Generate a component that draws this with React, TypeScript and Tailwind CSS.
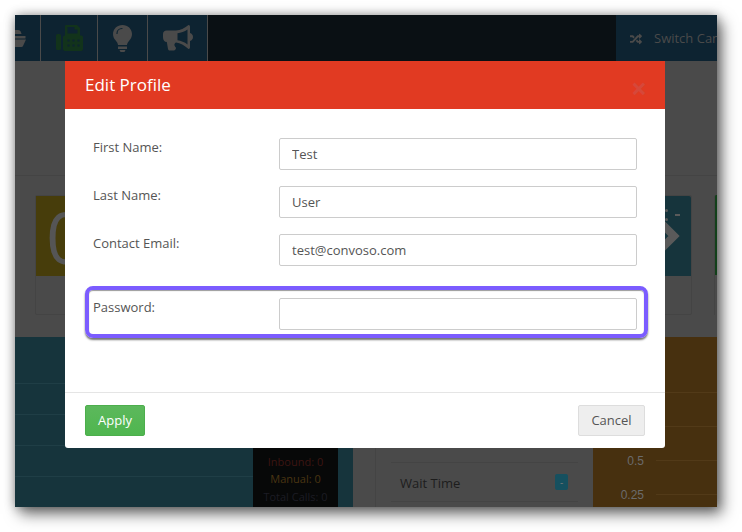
import { FaRandom } from 'react-icons/fa';

const font = 'font-["Open_Sans","Noto_Sans",sans-serif]';

const fields = [
  { label: 'First Name:', value: 'Test' },
  { label: 'Last Name:', value: 'User' },
  { label: 'Contact Email:', value: 'test@convoso.com' },
];

function Field({ label, value }: { label: string; value: string }) {
  return (
    <div className="flex h-[32px] items-start">
      <label className="w-[187px] shrink-0 pl-[1px] text-[13px] leading-[18px] text-[#555]">{label}</label>
      <input
        readOnly
        value={value}
        className="h-[32px] w-[358px] rounded-[2px] border border-[#ccc] bg-white px-3 text-[13px] text-[#555] outline-none"
      />
    </div>
  );
}

function PlateIcon() {
  return (
    <svg width="11" height="17" viewBox="0 0 11 17" fill="currentColor">
      <path d="M0 0h3c2 0 3 1.500 3.500 4H0z" />
      <path d="M0 6h10.500v2.500H0z" />
      <path d="M0 9.500h11L8 16c-.4.700-1 1-2 1H0z" />
    </svg>
  );
}

function FaxIcon() {
  return (
    <svg width="27" height="26" viewBox="0 0 27 26" fill="currentColor" fillRule="evenodd">
      <path d="M1.500 9h2A1.500 1.500 0 0 1 5 10.500v13A1.500 1.500 0 0 1 3.500 25h-2A1.500 1.500 0 0 1 0 23.500v-13A1.500 1.500 0 0 1 1.500 9z" />
      <path d="M10 0h11l3 3v7.500h1.500A1.500 1.500 0 0 1 27 12v12a2 2 0 0 1-2 2H9a2 2 0 0 1-2-2V12a1.500 1.500 0 0 1 1.500-1.500H9V1a1 1 0 0 1 1-1zm1.500 2v6.500h10V4.500h-3V2zm0 12.500v2h2v-2zm5 0v2h2v-2zm5 0v2h2v-2zm-10 5v2h2v-2zm5 0v2h2v-2zm5 0v2h2v-2z" />
    </svg>
  );
}

function BulbIcon() {
  return (
    <svg width="19" height="27" viewBox="0 0 19 27">
      <path
        fill="currentColor"
        d="M9.500 0C4.200 0 0 3.900 0 9c0 2.600 1 4.500 2.500 6.200 1.300 1.500 2.300 3 2.500 4.800h9c.2-1.800 1.200-3.300 2.500-4.800C18 13.500 19 11.600 19 9c0-5.100-4.200-9-9.500-9zM5 21.500h9V24H5zM6.500 25h6l-1 2h-4z"
      />
      <path d="M4 8.500C4 5.500 6.300 3.500 9 3.500" fill="none" stroke="#0d2331" strokeWidth="1.200" strokeLinecap="round" />
    </svg>
  );
}

function HornIcon() {
  return (
    <svg width="30" height="26" viewBox="0 0 30 26" fill="currentColor" fillRule="evenodd">
      <path d="M25.500 0c.8 0 1.500.7 1.500 1.500V8c1.800.4 3 2 3 4s-1.200 3.600-3 4v6.500c0 .8-.7 1.500-1.500 1.500-4.500-3.800-8-5.800-12.500-6.500-1.200.5-1.800 1.800-1.500 3 .3 1 1 1.800 1.600 2.500-.6 2-1.400 2.500-3.100 2.500H7c-1 0-1.700-.4-2-1.500L3.800 17C1.500 17 0 15.200 0 12.500V9c0-2 1.500-3.500 3.500-3.500H13C17.500 5 21 3.500 25.500 0zM24.500 4.500c-3 2.200-6.500 3.300-10 3.800v7c3.500.5 7 1.800 10 4.200z" />
    </svg>
  );
}

function TopBar() {
  return (
    <div className="flex h-[46px] items-stretch bg-[#0a1014]">
      <div className="flex bg-[#0d2331]">
        <div className="flex w-[26px] items-center justify-start overflow-hidden border-r border-[#4a4a4a] text-[#4a4a4a]">
          <PlateIcon />
        </div>
        <div className="flex w-[57px] items-center justify-center border-r border-[#4a4a4a] text-[#12331b]">
          <FaxIcon />
        </div>
        <div className="flex w-[50px] items-center justify-center border-r border-[#4a4a4a] text-[#4a4a4a]">
          <BulbIcon />
        </div>
        <div className="flex w-[60px] items-center justify-center border-r border-[#4a4a4a] text-[#4a4a4a]">
          <HornIcon />
        </div>
      </div>
      <div className="ml-auto flex w-[101px] items-center overflow-hidden whitespace-nowrap bg-[#0d2331] pl-[14px] pt-[2px] text-[13px] text-[#4a4a4a]">
        <FaRandom className="mr-[12px] shrink-0" size={12} />
        Switch Campaign
      </div>
    </div>
  );
}

function StatCards() {
  return (
    <div className="flex h-[162px] gap-[22px] border-t border-[#444] bg-[#4a4a4a] pl-[20px] pt-[19px]">
      <div className="h-[120px] w-[110px] rounded-[2px] border border-[#444]">
        <div className="h-[80px] overflow-hidden bg-[#473d0b] pl-[10px] text-[72px] leading-[80px] text-[#555]">0</div>
      </div>
      <div className="ml-auto h-[120px] w-[110px] rounded-[2px] border border-[#444]">
        <div className="relative flex h-[80px] items-center justify-end rounded-t-[2px] bg-[#16343c] pr-[10px] text-[#5a5a5a]">
          <span className="absolute right-[11px] top-[18px] h-[2px] w-[5px] bg-[#5a5a5a]" />
          <span className="absolute right-[23px] top-[13px] h-[3px] w-[3px] rounded-full bg-[#5a5a5a]" />
          <span className="absolute right-[23px] top-[22px] h-[3px] w-[3px] rounded-full bg-[#5a5a5a]" />
          <svg width="22" height="40" viewBox="0 0 22 40" fill="none" stroke="currentColor" strokeWidth="8">
            <path d="M0 5l15 15L0 35" />
          </svg>
        </div>
      </div>
      <div className="h-[120px] w-[3px] overflow-hidden rounded-tl-[2px] border-l border-[#444]">
        <div className="h-[80px] bg-[#12401a]" />
      </div>
    </div>
  );
}

function BottomPanels() {
  return (
    <div className="flex h-[170px] overflow-hidden">
      <div className="flex w-[323px] bg-[#16343c]">
        <div className="flex flex-1 flex-col pt-[46px]">
          {[0, 1, 2, 3].map((i) => (
            <div key={i} className="h-[34px] border-t border-[#1f3e46]" />
          ))}
        </div>
        <div className="flex w-[85px] flex-col items-center justify-end bg-[#070808] pb-[2px] text-[11px] leading-[17.500px]">
          <span className="text-[#3d1512]">Inbound: 0</span>
          <span className="text-[#4a3512]">Manual: 0</span>
          <span className="text-[#1c1c24]">Total Calls: 0</span>
        </div>
      </div>
      <div className="w-[15px] bg-[#16343c]" />
      <div className="w-[240px] bg-[#4a4a4a] pl-[22px] pr-[15px]">
        <div className="flex h-full flex-col justify-end border-l border-[#444] pl-[15px]">
          <div className="flex h-[39px] items-start justify-end">
            <span className="mr-[10px] mt-[-6px] h-[18px] w-[13px] rounded-[2px] bg-[#12401a]" />
          </div>
          <div className="mb-[5px] flex h-[40px] items-center justify-between border-y border-[#444] pl-[9px] pr-[10px]">
            <span className="pt-[3px] text-[13px] text-[#1d1d1d]">Wait Time</span>
            <span className="flex h-[16px] w-[13px] items-center justify-center rounded-[2px] bg-[#16505f] text-[10px] text-[#777]">-</span>
          </div>
        </div>
      </div>
      <div className="flex flex-1 flex-col bg-[#47300f] pt-[38px] font-['Liberation_Sans',sans-serif] text-[12px] text-[#6b6b6b]">
        {['', '', '0.5', '0.25'].map((v, i) => (
          <div key={i} className="flex h-[34px] w-full shrink-0 items-center justify-end">
            <span className="pt-[2px]">{v}</span>
            <div className="ml-[12px] h-px w-[61px] bg-[#523a18]" />
          </div>
        ))}
      </div>
    </div>
  );
}

export default function App() {
  return (
    <div className={`h-[532px] w-[742px] overflow-hidden bg-white pl-[15px] pt-[15px] ${font}`}>
      <div className="relative h-[492px] w-[702px] shadow-[5px_7px_14px_rgba(0,0,0,0.55),0_0_10px_rgba(0,0,0,0.35)]">
        <TopBar />
        <div className="h-[114px] bg-[#4a4a4a]" />
        <StatCards />
        <BottomPanels />

        {/* modal over the dimmed page */}
        <div className="absolute left-[50px] top-[46px] flex h-[387px] w-[600px] flex-col rounded-b-[3px] bg-white">
          <div className="flex h-[48px] shrink-0 items-center justify-between bg-[#e13a22] pl-[20px] pr-[18px]">
            <h2 className="text-[17px] font-normal text-white">Edit Profile</h2>
            <span className="mt-[6px] text-[28px] font-bold leading-none text-[#d6483a]">×</span>
          </div>
          <div className="relative flex flex-1 flex-col gap-[16px] pl-[27px] pr-[28px] pt-[29px]">
            {fields.map((f) => (
              <Field key={f.label} label={f.label} value={f.value} />
            ))}
            <div className="mt-[16px]">
              <Field label="Password:" value="" />
            </div>
            {/* highlight around the password row */}
            <div className="absolute left-[20px] top-[177px] h-[52px] w-[563px] rounded-[8px] border-4 border-[#7b5cff] shadow-[0_2px_2px_rgba(0,0,0,0.55),inset_0_1px_1px_rgba(0,0,0,0.4)]" />
          </div>
          <div className="flex h-[56px] shrink-0 items-center justify-between border-t border-[#e5e5e5] pl-[20px] pr-[20px]">
            <button className="h-[31px] w-[60px] rounded-[2px] border border-[#4cae4c] bg-[linear-gradient(#5cb85c,#4fb64f)] text-[13px] text-white">Apply</button>
            <button className="h-[31px] w-[67px] rounded-[2px] border border-[#ddd] bg-[#eeeeee] text-[13px] text-[#555]">Cancel</button>
          </div>
        </div>
      </div>
    </div>
  );
}
